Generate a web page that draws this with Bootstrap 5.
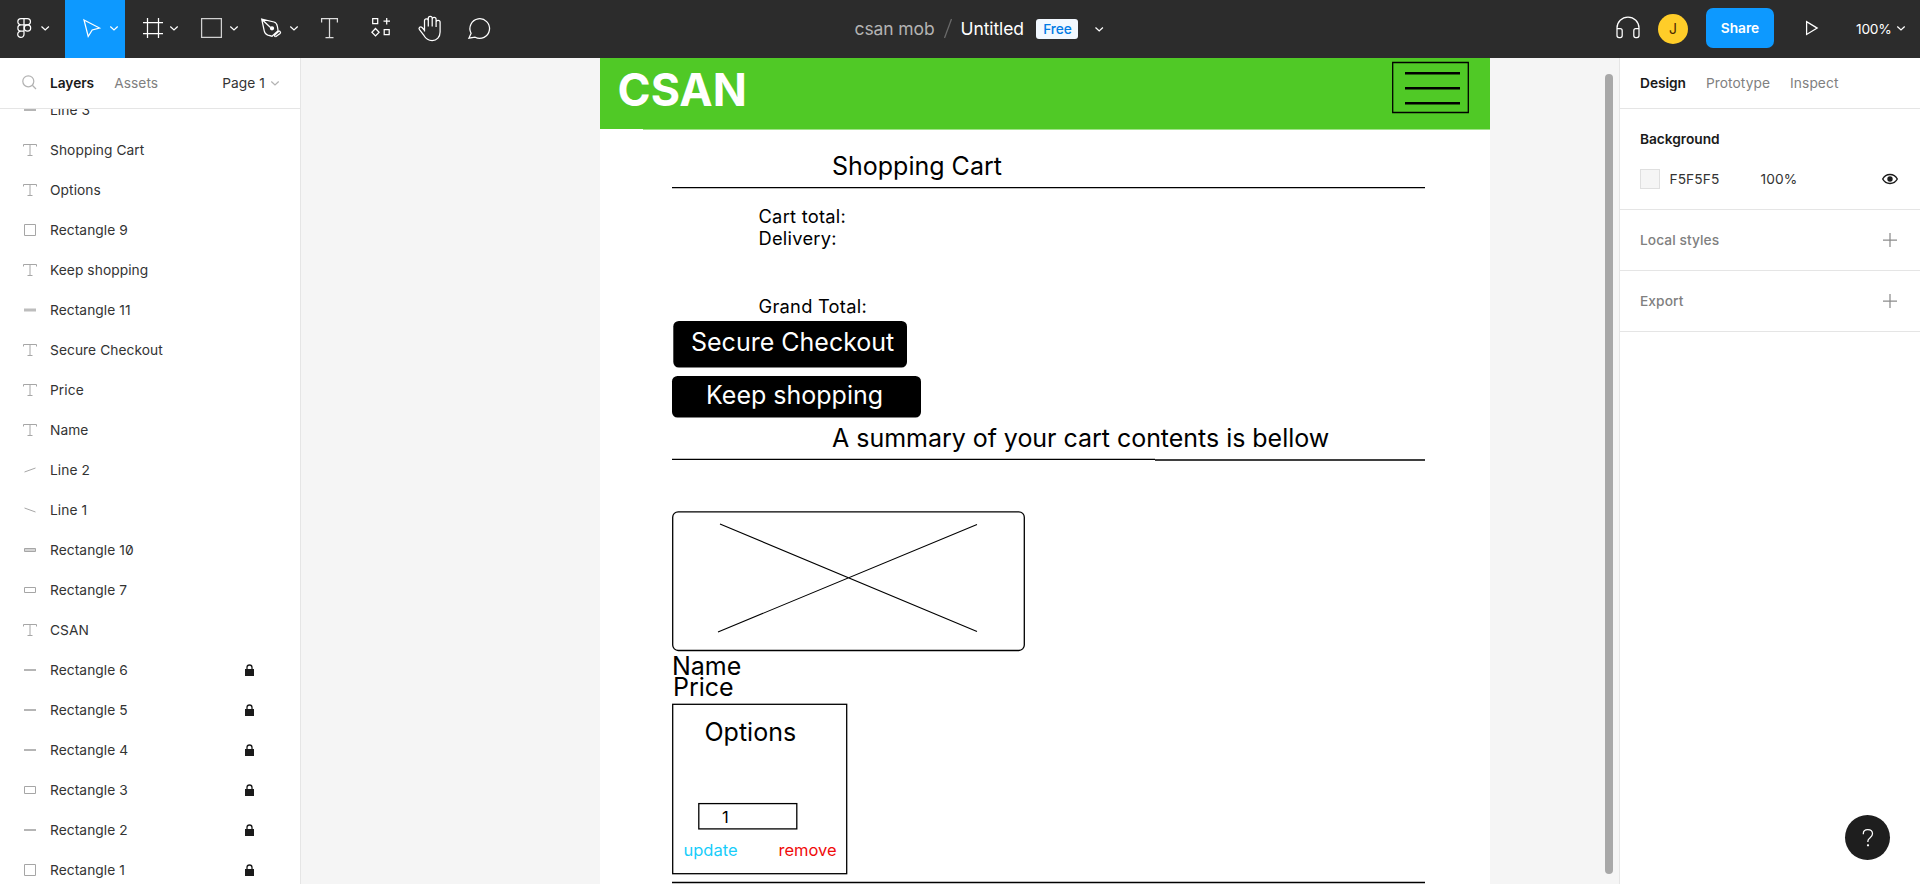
<!DOCTYPE html>
<html lang="en">
<head>
<meta charset="utf-8">
<meta name="viewport" content="width=device-width, initial-scale=1">
<title>Untitled</title>
<link href="https://cdn.jsdelivr.net/npm/bootstrap@5.3.0/dist/css/bootstrap.min.css" rel="stylesheet">
<style>
body{font-family:"Inter",sans-serif;font-size:13.75px;line-height:20px;color:#333;letter-spacing:.07px}
svg{display:block;flex:none;fill:none}
.toolbar{height:58px;background:#2c2c2c;color:#fff}
.toolbar svg{stroke:#fff;stroke-width:1.25}
.tool-on{background:#0d99ff}
.tool-side{width:505px}
.doc-title{font-size:17.5px;letter-spacing:-.1px;margin-left:39px}
.muted-name{color:#b3b3b3}
.free-tag{background:#f2f8ff;color:#007be5;width:42px;height:20px;border-radius:3px;font-size:13.75px;line-height:20px;margin-left:12.5px}
.title-chev{margin-left:16px}
.avatar{width:30px;height:30px;background:#ffcd29;color:#4d2b00;line-height:30px;font-size:14px}
.share-btn{width:68px;height:40px;background:#0d99ff;border-radius:7px;font-weight:600;font-size:13.75px;line-height:38px;color:#fff;padding:0;border:0;margin-left:18px}
.zoom-txt{width:35px;letter-spacing:-.2px;white-space:nowrap}
.side-l{width:301px;border-right:1px solid #e5e5e5}
.side-r{width:301px;border-left:1px solid #e5e5e5}
.tabs{height:51px;border-bottom:1px solid #e5e5e5}
.tabs-gap{gap:20px}
.on-tab{font-weight:600;color:#1a1a1a;letter-spacing:-.05px}
.off-tab{color:#808080}
.layer-list{margin-top:-19px}
.layer-row{height:40px;padding-left:20px}
.layer-row svg{stroke:#a6a6a6}
.layer-row span{width:146px;margin-left:10px;white-space:nowrap;font-feature-settings:"zero"}
.layer-row .lock-icon{margin-left:48px}
.clip-box{overflow:hidden}
.section-row{height:61px;border-bottom:1px solid #e5e5e5;color:#808080;font-weight:500;padding:0 20px}
.bg-section{height:101px;border-bottom:1px solid #e5e5e5;padding:20px 20px 0}
.bg-row{margin-top:20px}
.swatch{width:20px;height:20px;background:#f5f5f5;border:1px solid #dfdfdf}
.hex{width:91px;margin-left:9.500px}
.board{background:#f5f5f5}
.frame{position:absolute;left:299px;top:0;width:890px;height:826px;background:#fff;color:#000}
.frame svg{position:absolute;left:0;top:0}
.node{position:absolute;line-height:1;white-space:nowrap;font-size:25px;letter-spacing:0}
.n-logo{left:17.5px;top:10px;font-size:44.8px;font-weight:700;color:#fff}
.n-head{left:232px;top:96px}
.n-cart,.n-deliv,.n-grand{left:158.5px;font-size:18.3px;letter-spacing:.26px}
.n-cart{top:149px}
.n-deliv{top:171px}
.n-grand{top:238.500px}
.n-secure{left:91px;top:272px;color:#fff}
.n-keep{left:106px;top:325px;color:#fff}
.n-sum{left:232px;top:368px;letter-spacing:-.03px}
.n-name{left:72px;top:596px}
.n-price{left:73px;top:617px}
.n-opt{left:104.5px;top:662px}
.n-one{left:122px;top:751px;font-size:16.5px}
.n-upd{left:83.500px;top:784px;font-size:16.5px;color:#17cdfa}
.n-rem{left:178.500px;top:784px;font-size:16.5px;color:#f00b0b}
.thumb-bar{position:absolute;right:6.500px;top:16px;width:7.500px;height:800px;border-radius:4px;background:#a8a8a8}
.help-btn{position:absolute;left:1845px;top:815px;width:45px;height:45px;background:#1e1e1e}
</style>
</head>
<body class="vh-100 overflow-hidden d-flex flex-column bg-white position-relative">
<svg width="0" height="0" class="position-absolute"><defs>
<g id="t"><path d="M3.500 6.500V4.500H16.500V6.500M10 4.500V15.500M7.500 15.500H12.500"/></g>
<g id="sq"><path d="M4.500 4.500h11v11h-11z"/></g>
<g id="rc"><path d="M4.500 6.500h11v7h-11z"/></g>
<g id="rs"><path d="M4.500 7.500h11v5h-11z"/></g>
<g id="bar"><path d="M4 10H16" stroke-width="3" stroke="#bdbdbd"/></g>
<g id="bar4"><path d="M4.500 8.500h11v3h-11z" fill="#d4d4d4"/></g>
<g id="ln"><path d="M4 10H16" stroke-width="2" stroke="#b5b5b5"/></g>
<g id="up"><path d="M4.500 12L15.500 8"/></g>
<g id="dn"><path d="M4.500 8L15.500 12"/></g>
<g id="lock"><path d="M1 5h9v7H1z" fill="#1a1a1a" stroke="none"/><path d="M3 5.500V3.500a2.500 2.500 0 0 1 5 0V5.500" stroke="#1a1a1a" stroke-width="1.300"/></g>
</defs></svg>

<header class="toolbar d-flex align-items-center justify-content-between flex-shrink-0">
  <div class="tool-side d-flex">
    <svg width="65" height="58" viewBox="0 0 65 58"><path d="M24 18.600h-3a3.150 3.150 0 0 0 0 6.300h3zM24 18.600h3.300a3.150 3.150 0 0 1 0 6.300H24zM24 24.900h-3a3.150 3.150 0 0 0 0 6.300h3zM24 31.200h-3a3.150 3.150 0 1 0 3 3.150z"/><circle cx="27.500" cy="28.050" r="3.150"/><path d="M41.500 26.500l3.700 3.500 3.700-3.500"/></svg>
    <svg class="tool-on" width="60" height="58" viewBox="65 0 60 58"><path d="M84 20l15.500 8-7.300 2-4 6.500z"/><path d="M110.300 26.500l3.700 3.500 3.700-3.500"/></svg>
    <svg width="60" height="58" viewBox="125 0 60 58"><path d="M147.500 18v20M158.500 18v20M143 22.500h20M143 33.500h20"/><path d="M170.300 26.500l3.700 3.500 3.700-3.500"/></svg>
    <svg width="60" height="58" viewBox="185 0 60 58"><path d="M201.600 18.600h19.800v18.800h-19.800z" stroke="#d0d0d0"/><path d="M230.300 26.500l3.700 3.500 3.700-3.500"/></svg>
    <svg width="60" height="58" viewBox="245 0 60 58"><path d="M261.700 19.200l12.300 2.800c2 .5 3 2 3.400 4.500l.7 4.200-6.100 5.500-4.200-1c-2-.6-3-1.700-3.500-4zM261.700 19.200l8.800 8.300M275.600 36.700c-1-.3-1.300-1-.6-1.800l3.500-3.400c.8-.7 1.500-.4 1.800.6l.4 1.100"/><path d="M275.600 36.700l4.900-3.500"/><circle cx="272" cy="28.300" r="1.500" fill="#fff"/><path d="M290.300 26.500l3.700 3.500 3.700-3.500"/></svg>
    <svg width="50" height="58" viewBox="305 0 50 58"><path d="M321.600 22.500v-4h15.800v4M329.500 18.500v19M325.500 37.500h8" stroke="#ddd"/></svg>
    <svg width="50" height="58" viewBox="355 0 50 58"><path d="M372.700 18.700h5v5h-5zM384.200 29.700h5v5h-5zM386.700 18v6.500M383.500 21.200h6.500M375.500 28.500l3.600 3.700-3.600 3.700-3.600-3.700z"/></svg>
    <svg width="50" height="58" viewBox="405 0 50 58"><path d="M424.500 31.500V20.700a1.900 1.900 0 0 1 3.800 0V26.500M428.300 26.500V18.300a1.900 1.900 0 0 1 3.900 0V26.500M432.200 26.500V19.400a1.900 1.900 0 0 1 3.900 0V27M436.100 22.300a2 2 0 0 1 4 0V32c0 5-3.200 8.500-8 8.500-4 0-6.200-1.700-8-4.800l-4.600-6c-1.500-2.200 1-3.700 2.600-2.200l2.400 2.800"/></svg>
    <svg width="50" height="58" viewBox="455 0 50 58"><path d="M468.900 38.200l2.200-5a9.800 9.800 0 1 1 4 4z"/></svg>
  </div>
  <div class="doc-title d-flex align-items-center">
    <span class="muted-name">csan mob</span>
    <svg width="26" height="22"><path d="M9.500 20L16.500 1" stroke="#6b6b6b"/></svg>
    <span class="text-white">Untitled</span>
    <span class="free-tag text-center fw-medium">Free</span>
    <svg class="title-chev" width="10" height="8"><path d="M1.500 2.500l3.700 3.500 3.700-3.500"/></svg>
  </div>
  <div class="tool-side d-flex justify-content-end align-items-center">
    <svg width="43" height="58" viewBox="1615 0 43 58"><path d="M1617 33v-5a11 11 0 0 1 22 0v5M1617 28.700h3.200c1.500 0 2 .8 2 2v4.800c0 1.200-.6 2-1.900 2h-1.200c-1.400 0-2.100-.8-2.100-2.100zM1639 28.700h-3.200c-1.500 0-2 .8-2 2v4.800c0 1.200.6 2 1.900 2h1.200c1.400 0 2.100-.8 2.100-2.100z"/></svg>
    <span class="avatar rounded-circle text-center">J</span>
    <button class="share-btn btn mb-0 align-self-start mt-2">Share</button>
    <svg width="82" height="58" viewBox="1774 0 82 58"><path d="M1806.600 21.700v12.800l10.600-6.400z"/></svg>
    <span class="zoom-txt">100%</span>
    <svg width="29" height="58" viewBox="1891 0 29 58"><path d="M1897.300 26.500l3.700 3.500 3.700-3.500"/></svg>
  </div>
</header>

<div class="d-flex flex-grow-1 overflow-hidden">
  <aside class="side-l d-flex flex-column flex-shrink-0 bg-white">
    <div class="tabs d-flex align-items-center flex-shrink-0">
      <svg width="50" height="50"><circle cx="28.300" cy="23.300" r="5.500" stroke="#b3b3b3" stroke-width="1.250"/><path d="M32.300 27.300L36 31" stroke="#b3b3b3" stroke-width="1.250"/></svg>
      <div class="d-flex tabs-gap"><span class="on-tab">Layers</span><span class="off-tab">Assets</span></div>
      <span class="ms-auto">Page 1</span>
      <svg width="35" height="50"><path d="M6.300 23.500l3.700 3.500 3.700-3.500" stroke="#b3b3b3" stroke-width="1.250"/></svg>
    </div>
    <div class="clip-box flex-grow-1"><div class="layer-list" id="layers"></div></div>
  </aside>

  <main class="board flex-grow-1 position-relative overflow-hidden">
    <div class="frame">
      <svg width="890" height="826" viewBox="0 0 890 826" stroke="#000" stroke-width="1.300">
        <path d="M0 0H890V71H0z" fill="#50c926" stroke="none"/>
        <path d="M43 71.500H890" stroke="#a0e389" stroke-width="1"/>
        <path d="M792.700 4.500h75.600v50h-75.600z"/>
        <path d="M805 15.300h55M805 30.300h55M805 45.300h55" stroke-width="2.600"/>
        <path d="M72 129.600H825M72 401.300H555M555 402H825M72 824.500H825"/>
        <rect x="73.300" y="263" width="233.700" height="46.500" rx="5.500" fill="#000" stroke="none"/>
        <rect x="72" y="318" width="249" height="41.500" rx="5.500" fill="#000" stroke="none"/>
        <rect x="72.700" y="453.800" width="351.600" height="138.700" rx="5.500"/>
        <path d="M120 466L377 573.500M118 574L377 466.500" stroke-width="1.100"/>
        <rect x="72.700" y="646.300" width="174" height="169.400"/>
        <rect x="98.800" y="745.600" width="98" height="25.300"/>
      </svg>
      <span class="node n-logo">CSAN</span>
      <span class="node n-head">Shopping Cart</span>
      <span class="node n-cart">Cart total:</span>
      <span class="node n-deliv">Delivery:</span>
      <span class="node n-grand">Grand Total:</span>
      <span class="node n-secure">Secure Checkout</span>
      <span class="node n-keep">Keep shopping</span>
      <span class="node n-sum">A summary of your cart contents is bellow</span>
      <span class="node n-name">Name</span>
      <span class="node n-price">Price</span>
      <span class="node n-opt">Options</span>
      <span class="node n-one">1</span>
      <span class="node n-upd">update</span>
      <span class="node n-rem">remove</span>
    </div>
    <div class="thumb-bar"></div>
  </main>

  <aside class="side-r flex-shrink-0 bg-white">
    <div class="tabs tabs-gap d-flex align-items-center px-3">
      <span class="on-tab ms-1">Design</span><span class="off-tab">Prototype</span><span class="off-tab">Inspect</span>
    </div>
    <div class="bg-section">
      <div class="on-tab">Background</div>
      <div class="bg-row d-flex align-items-center">
        <span class="swatch"></span><span class="hex">F5F5F5</span><span>100%</span>
        <svg class="ms-auto" width="20" height="20" stroke="#1a1a1a" stroke-width="1.400"><path d="M2.700 10c1.600-3 4.200-4.500 7.300-4.500s5.700 1.500 7.300 4.500c-1.600 3-4.200 4.500-7.300 4.500S4.300 13 2.700 10z"/><circle cx="10" cy="10" r="2" fill="#1a1a1a"/></svg>
      </div>
    </div>
    <div class="section-row d-flex align-items-center justify-content-between">Local styles<svg width="20" height="20" stroke="#8c8c8c" stroke-width="1.250"><path d="M10 3v14M3 10h14"/></svg></div>
    <div class="section-row d-flex align-items-center justify-content-between">Export<svg width="20" height="20" stroke="#8c8c8c" stroke-width="1.250"><path d="M10 3v14M3 10h14"/></svg></div>
  </aside>
</div>
<div class="help-btn rounded-circle"><svg width="45" height="45" stroke="#fff" stroke-width="1.250"><path d="M18.300 19.300v-.6c0-2.400 1.900-4 4.500-4s4.700 1.600 4.700 4.100c0 2-1.100 3-2.600 4.100-1.400 1-2 1.700-2 3.100v1"/><circle cx="23" cy="30.300" r=".5" fill="#fff"/></svg></div>
<script>
const rows=[["ln","Line 3"],["t","Shopping Cart"],["t","Options"],["sq","Rectangle 9"],["t","Keep shopping"],["bar","Rectangle 11"],["t","Secure Checkout"],["t","Price"],["t","Name"],["up","Line 2"],["dn","Line 1"],["bar4","Rectangle 10"],["rs","Rectangle 7"],["t","CSAN"],["ln","Rectangle 6",1],["ln","Rectangle 5",1],["ln","Rectangle 4",1],["rc","Rectangle 3",1],["ln","Rectangle 2",1],["sq","Rectangle 1",1]];
document.getElementById("layers").innerHTML=rows.map(([i,n,l])=>`<div class="layer-row d-flex align-items-center"><svg width="20" height="20"><use href="#${i}"/></svg><span>${n}</span>${l?'<svg class="lock-icon" width="11" height="13"><use href="#lock"/></svg>':''}</div>`).join("");
</script>
<script src="https://cdn.jsdelivr.net/npm/bootstrap@5.3.0/dist/js/bootstrap.bundle.min.js"></script>
</body>
</html>
